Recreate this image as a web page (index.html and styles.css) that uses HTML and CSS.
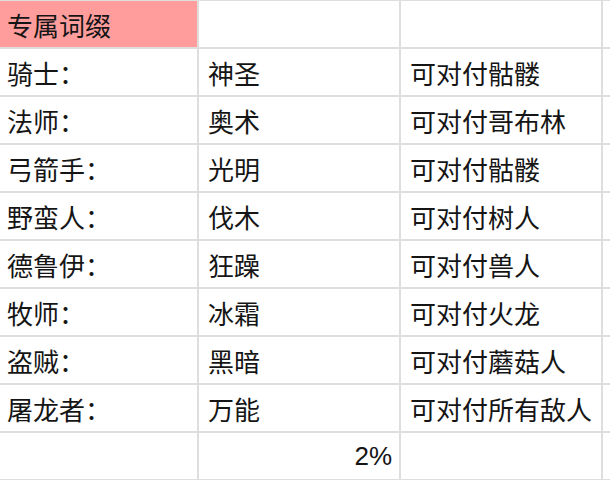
FILE: index.html
```html
<!DOCTYPE html>
<html lang="zh-CN">
<head>
<meta charset="utf-8">
<link rel="stylesheet" href="styles.css">
</head>
<body>
<div class="sheet">
  <div class="cell first head">专属词缀</div><div class="cell"></div><div class="cell"></div><div class="cell"></div>
  <div class="cell first">骑士：</div><div class="cell">神圣</div><div class="cell">可对付骷髅</div><div class="cell"></div>
  <div class="cell first">法师：</div><div class="cell">奥术</div><div class="cell">可对付哥布林</div><div class="cell"></div>
  <div class="cell first">弓箭手：</div><div class="cell">光明</div><div class="cell">可对付骷髅</div><div class="cell"></div>
  <div class="cell first">野蛮人：</div><div class="cell">伐木</div><div class="cell">可对付树人</div><div class="cell"></div>
  <div class="cell first">德鲁伊：</div><div class="cell">狂躁</div><div class="cell">可对付兽人</div><div class="cell"></div>
  <div class="cell first">牧师：</div><div class="cell">冰霜</div><div class="cell">可对付火龙</div><div class="cell"></div>
  <div class="cell first">盗贼：</div><div class="cell">黑暗</div><div class="cell">可对付蘑菇人</div><div class="cell"></div>
  <div class="cell first">屠龙者：</div><div class="cell">万能</div><div class="cell">可对付所有敌人</div><div class="cell"></div>
  <div class="cell first"></div><div class="cell num">2%</div><div class="cell"></div><div class="cell"></div>
</div>
</body>
</html>
```
FILE: styles.css
```css
html, body {
  margin: 0;
  padding: 0;
  background: #ffffff;
}
.sheet {
  width: 610px;
  height: 480px;
  display: grid;
  grid-template-columns: 197px 200px 200px 1fr;
  grid-auto-rows: 46px;
  gap: 2px;
  padding-top: 1px;
  box-sizing: border-box;
  background: #dedede;
  overflow: hidden;
  font-family: "Liberation Sans", "Noto Sans CJK SC", sans-serif;
  font-size: 26px;
  color: #151515;
}
.cell {
  background: #ffffff;
  display: flex;
  align-items: center;
  padding-left: 9px;
  white-space: nowrap;
  overflow: hidden;
}
.cell.first {
  padding-left: 7px;
}
.cell.head {
  background: #ff9d9d;
}
.cell.num {
  justify-content: flex-end;
  padding-left: 0;
  padding-right: 7px;
}
```
